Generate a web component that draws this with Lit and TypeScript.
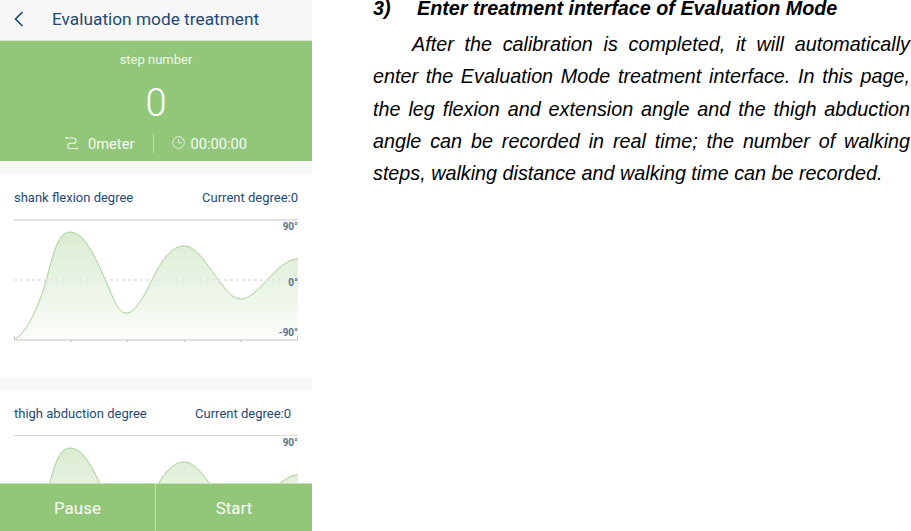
import { LitElement, html, css, svg } from "lit";
import { customElement, property } from "lit/decorators.js";

const CURVE =
  "M0 120 C12 113 22 92 30 68 C38 42 42 12 56 12 C72 12 84 44 94 66 C100 80 104 93 113 93 C122 93 132 72 140 56 C148 40 158 26 170 26 C184 26 196 50 206 62 C212 70 219 79 227 79 C237 79 248 65 258 55 C266 47 274 39 284 39";

@customElement("degree-chart")
class DegreeChart extends LitElement {
  @property() title = "";
  @property() current = "";
  @property() gid = "g";
  static styles = css`
    :host { display: block; background: #fff; padding: 0 14px; }
    .head { display: flex; justify-content: space-between; align-items: center; height: 46px; padding-top: 2px; box-sizing: border-box; font: 13px Roboto, sans-serif; color: #1d4a76; border-bottom: 1px solid #d8d8d8; }
    :host(.first) .head { height: 47px; border-bottom: 2px solid #e2e2e2; }
    :host(.first) svg { margin-top: -1px; }
    :host(.second) .cur { margin-right: 7px; }
    svg { display: block; width: 284px; height: 121px; overflow: visible; }
    .lab { font: 700 10px Roboto, sans-serif; fill: #56718f; text-anchor: end; }
  `;
  render() {
    return html`
      <div class="head"><span>${this.title}</span><span class="cur">${this.current}</span></div>
      <svg viewBox="0 0 284 121">
        <defs>
          <linearGradient id=${this.gid} x1="0" y1="0" x2="0" y2="1">
            <stop offset="0" stop-color="#92c77a" stop-opacity=".34" />
            <stop offset="1" stop-color="#92c77a" stop-opacity=".04" />
          </linearGradient>
        </defs>
        <path d="${CURVE} V120 H0 Z" fill="url(#${this.gid})" />
        <path d=${CURVE} fill="none" stroke="#a3d08e" stroke-width="1" />
        <line x1="0" x2="284" y1="60" y2="60" stroke="#dedede" stroke-width="1.500" stroke-dasharray="3 3" />
        <path d="M.5 116V120H283.5V116M57 120V122M113.5 120V122M170.5 120V122M227 120V122" fill="none" stroke="#c4c4c4" stroke-width="1" />
        ${svg`<text class="lab" x="284" y="10">90°</text>
        <text class="lab" x="284" y="66">0°</text>
        <text class="lab" x="284" y="116">-90°</text>`}
      </svg>
    `;
  }
}

@customElement("app-root")
class AppRoot extends LitElement {
  static styles = css`
    :host { display: grid; grid-template-columns: 312px 537px; column-gap: 61px; height: 531px; width: 911px; overflow: hidden; background: #fff; }
    .phone { display: flex; flex-direction: column; height: 531px; overflow: hidden; font-family: Roboto, sans-serif; background: #f7f7f7; }
    .scroll { flex: 1; min-height: 0; overflow: hidden; }
    .nav { display: flex; align-items: center; height: 38px; padding: 0 0 2px 14px; gap: 28px; color: #1d4a76; font-size: 17.3px; border-bottom: 1px solid #d8e6d0; }
    .nav svg { width: 10px; height: 16px; display: block; }
    .hero { height: 120px; background: #92c77a; color: #fff; display: flex; flex-direction: column; align-items: center; }
    .label { font-size: 13px; margin-top: 11px; line-height: 15px; opacity: .85; }
    .big { font-size: 38px; font-weight: 300; line-height: 44px; margin-top: 14px; }
    .stats { display: flex; align-items: center; font-size: 14.7px; margin-top: 9px; height: 20px; opacity: .92; }
    .stats svg { display: block; opacity: .85; }
    .meter { display: flex; align-items: center; gap: 9px; }
    .sep { width: 1px; height: 19px; background: #c6e0b8; margin: -2px 18px 0 19px; }
    .time { display: flex; align-items: center; gap: 5px; }
    .time svg { margin-top: -3px; }
    .card { margin-top: 13px; }
    .card.first { height: 203px; overflow: hidden; }
    .foot { display: grid; grid-template-columns: 155px 1px 156px; height: 47px; background: #92c77a; color: #fff; font-size: 17px; flex: none; border-top: 1px solid #c3dfb4; margin-top: -1px; }
    .foot span { display: flex; align-items: center; justify-content: center; opacity: .95; }
    .foot i { background: #c6e0b8; }
    .doc { font: italic 19.75px "Liberation Sans", Arial, sans-serif; color: #000; width: 537px; }
    .h { display: flex; font-weight: bold; line-height: 16px; }
    .h b { width: 44px; flex: none; }
    .p { margin: 12px 0 0; line-height: 32.3px; text-align: justify; text-indent: 39px; }
  `;
  render() {
    return html`
      <div class="phone">
        <div class="scroll">
          <div class="nav">
            <svg viewBox="0 0 10 16"><path d="M8.500 1 1.500 8l7 7" fill="none" stroke="#1d4a76" stroke-width="1.700" /></svg>
            <span>Evaluation mode treatment</span>
          </div>
          <div class="hero">
            <div class="label">step number</div>
            <div class="big">0</div>
            <div class="stats">
              <div class="meter">
                <svg width="14" height="14" viewBox="0 0 14 14" fill="none" stroke="#fff" stroke-width="1.200">
                  <path d="M1.500 1H8.500C11.700 1 11.700 6.300 8.500 6.300H5C2 6.300 2 11.500 5 11.500H12" />
                  <circle cx="1.500" cy="1" r="1.100" fill="#fff" stroke="none" />
                  <circle cx="12" cy="11.500" r="1.100" fill="#fff" stroke="none" />
                </svg>
                <span>0meter</span>
              </div>
              <div class="sep"></div>
              <div class="time">
                <svg width="13" height="13" viewBox="0 0 13 13" fill="none" stroke="#fff" stroke-width="1">
                  <circle cx="6.500" cy="6.500" r="5.800" />
                  <path d="M6.500 3V6.800H9.800" />
                </svg>
                <span>00:00:00</span>
              </div>
            </div>
          </div>
          <degree-chart class="card first" gid="g1" title="shank flexion degree" current="Current degree:0"></degree-chart>
          <degree-chart class="card second" gid="g2" title="thigh abduction degree" current="Current degree:0"></degree-chart>
        </div>
        <div class="foot"><span>Pause</span><i></i><span>Start</span></div>
      </div>
      <div class="doc">
        <div class="h"><b>3)</b><span>Enter treatment interface of Evaluation Mode</span></div>
        <p class="p">After the calibration is completed, it will automatically enter the Evaluation Mode treatment interface. In this page, the leg flexion and extension angle and the thigh abduction angle can be recorded in real time; the number of walking steps, walking distance and walking time can be recorded.</p>
      </div>
    `;
  }
}
